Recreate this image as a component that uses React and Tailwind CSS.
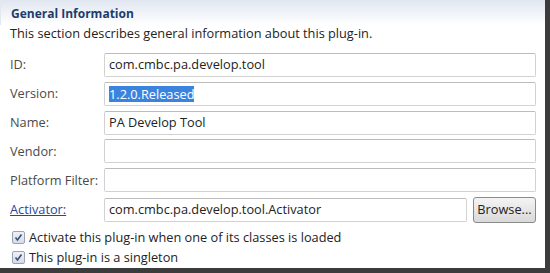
import React from 'react';

const rows = [
  { label: 'ID:', value: 'com.cmbc.pa.develop.tool' },
  { label: 'Version:', value: '1.2.0.Released', selected: true },
  { label: 'Name:', value: 'PA Develop Tool' },
  { label: 'Vendor:', value: '' },
  { label: 'Platform Filter:', value: '' },
];

function Field({ children, className = '' }) {
  return (
    <div className={`h-[24px] flex items-center px-[4px] border border-[#d2d2d2] border-t-[#bcbcbc] rounded-[2px] bg-white text-[#222] ${className}`}>
      {children}
    </div>
  );
}

function Check({ label }) {
  return (
    <div className="flex items-center h-[20px] gap-[4px]">
      <span className="w-[13px] h-[13px] border border-[#9aa3b2] rounded-[2px] bg-gradient-to-b from-[#eef1f6] to-[#d5dce8] flex items-center justify-center">
        <svg width="9" height="9" viewBox="0 0 9 9">
          <path d="M1.5 4.5 L3.5 7 L7.5 1.5" fill="none" stroke="#3a4f7a" strokeWidth="1.6" />
        </svg>
      </span>
      <span className="text-[#222]">{label}</span>
    </div>
  );
}

export default function App() {
  return (
    <div
      className="w-[550px] h-[273px] bg-white border-r-[5px] border-b-[5px] border-[#3c3c3c] overflow-hidden text-[12.75px]"
      style={{ fontFamily: '"Open Sans", "Noto Sans", sans-serif' }}
    >
      <div className="h-[25px] pl-[10px] pt-[3px] flex items-center bg-gradient-to-b from-[#e0e6f0] to-white border-l border-[#e4e8ee]">
        <h2 className="font-bold text-[12px] text-[#1d3c6e]">General Information</h2>
      </div>
      <p className="pl-[10px] h-[20px] leading-[16px] text-[#222]">
        This section describes general information about this plug-in.
      </p>
      <div className="mt-[8px] pl-[10px] pr-[9px] flex flex-col gap-[4.8px]">
        {rows.map((r) => (
          <div key={r.label} className="flex items-center">
            <span className="w-[94px] text-[#4a4a4a]">{r.label}</span>
            <Field className="flex-1">
              {r.selected ? (
                <span className="bg-[#3a84e0] text-white leading-[16px]">{r.value}</span>
              ) : (
                r.value
              )}
            </Field>
          </div>
        ))}
        <div className="flex items-center">
          <span className="w-[94px] text-[#27479a] underline">Activator:</span>
          <Field className="flex-1">com.cmbc.pa.develop.tool.Activator</Field>
          <button className="ml-[6px] w-[63px] h-[26px] rounded-[3px] border border-[#8a8a8a] bg-gradient-to-b from-[#f4f4f4] to-[#d9d9d9] text-[#222]">
            Browse...
          </button>
        </div>
      </div>
      <div className="pl-[12px] mt-[5px]">
        <Check label="Activate this plug-in when one of its classes is loaded" />
        <Check label="This plug-in is a singleton" />
      </div>
    </div>
  );
}
